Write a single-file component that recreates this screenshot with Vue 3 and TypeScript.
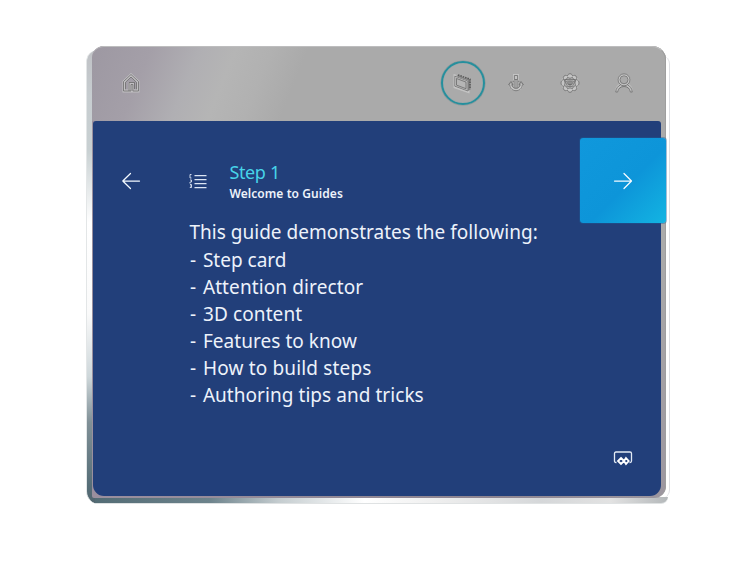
<script setup lang="ts">
interface GuideLine { text: string; spacing: number }

const intro = 'This guide demonstrates the following:'
const lines: GuideLine[] = [
  { text: 'Step card', spacing: 0 },
  { text: 'Attention director', spacing: 0.11 },
  { text: '3D content', spacing: 0.12 },
  { text: 'Features to know', spacing: 0.05 },
  { text: 'How to build steps', spacing: 0.17 },
  { text: 'Authoring tips and tricks', spacing: 0.05 },
]
</script>

<template>
  <main class="stage">
    <div class="frame">
      <div class="edge edge-left"></div>
      <div class="edge edge-right"></div>
      <div class="edge edge-bottom"></div>
      <section class="face">
        <nav class="toolbar">
          <button class="tool home" aria-label="Home">
            <svg width="20" height="20" viewBox="0 0 20 20">
              <g class="halo"><path d="M3 18V8.600L10 2l7 6.600V18h-5.500v-7H8.500v7z" /></g>
              <g class="ink"><path d="M2.500 18V8.500L10 1.500l7.500 7V18h-5.600v-6.500H10V18z" /><path d="M4.500 16.300V9.300L10 4l5.500 5.300v7M8 18v-8.500h5.500V16" /></g>
            </svg>
          </button>
          <div class="tools">
            <button class="tool ring" aria-label="Step card">
              <svg width="22" height="22" viewBox="0 0 22 22">
                <path class="halo" d="M3 4l13 4.500v11L3 15z" />
                <path class="pages" d="M5.500 3.200l13 4.500v10l-2.500 1V8.500L4 4z" />
                <path class="sheet" d="M3 4.500l12.500 4.500v10L3 14.500z" />
                <g class="ink"><path d="M2.800 4.200l13 4.800v10l-13-4.800zM4.500 6.500l9.500 3.600v6.600l-9.500-3.600z" /><path class="dash" d="M6 3l12 4.200v9.800" /></g>
              </svg>
            </button>
            <button class="tool" aria-label="Anchor">
              <svg width="20" height="20" viewBox="0 0 20 20">
                <g class="halo"><path d="M8.500 2.500h3v4h-3zM10 6v10M4 11c0 4 3 5.500 6 5.500s6-1.500 6-5.500" /></g>
                <g class="ink"><path d="M8.400 2.500h3.200v4H8.400zM9 6.500v9M11 6.500v9" /><path d="M7.700 7.500L7 9M12.300 7.500L13 9M5 8.500l-2.500 3.200h1.200c0 4 3.300 6 6.300 6s6.300-2 6.300-6h1.200L15 8.500l-2 3.200h1.200c-.5 2.300-2 3.600-4.200 3.600s-3.700-1.300-4.200-3.600H7z" /></g>
              </svg>
            </button>
            <button class="tool" aria-label="Settings">
              <svg width="22" height="22" viewBox="0 0 22 22">
                <circle class="halo" cx="11" cy="11" r="7.500" /><circle class="halo" cx="11" cy="11" r="4" />
                <g class="ink">
                  <path d="M8.500 4c0-3 5-3 5 0 2.500-2 5.500 1 3.500 3.500 4 .5 4 6.500 0 7 2 2.500-1 5.500-3.500 3.500 0 3-5 3-5 0-2.500 2-5.500-1-3.500-3.500-4-.5-4-6.500 0-7C3 5 6 2 8.500 4z" />
                  <path d="M8.500 5.500q2.500 2 5 0 .5 2.500 3 3-1.500 2.500 0 5-2.500.5-3 3-2.500-1.500-5 0-.5-2.500-3-3 1.500-2.500 0-5 2.500-.5 3-3z" />
                  <path d="M5.500 7.500h11l-3 7h-5zM7.500 9h7l-2 4h-3zM10 9.500v3h2v-3" />
                </g>
              </svg>
            </button>
            <button class="tool" aria-label="Profile">
              <svg width="20" height="22" viewBox="0 0 20 22">
                <g class="halo"><circle cx="10" cy="8" r="5" /><path d="M2.700 20c0-4 2-6.500 4.800-7M17.300 20c0-4-2-6.500-4.800-7" /></g>
                <g class="ink"><circle cx="10" cy="7.800" r="6" /><circle cx="10" cy="7.800" r="4" /><path d="M6.500 12.900C4 14 2 16.500 1.700 20h2c.3-3.500 3-5.500 6.300-5.500s6 2 6.300 5.500h2c-.3-3.500-2.300-6-4.800-7.100" /></g>
              </svg>
            </button>
          </div>
        </nav>

        <article class="card">
          <button class="back" aria-label="Previous step">
            <svg class="line" width="20" height="18" viewBox="0 0 20 18"><path d="M18.500 9H1.800M9.500 1.500L1.800 9l7.700 7.500" /></svg>
          </button>
          <div class="content">
            <header class="heading">
              <svg class="list" width="18" height="16" viewBox="0 0 18 16">
                <path d="M5.500 2.500h12M5.500 6.500h12M5.500 10.500h12M5.500 14.500h12" />
                <path class="nums" d="M2.500 1.500H1V5M1 5h1.500M1 7h1.500v2H1v1.500M1 11.500h1.500v3H.8M1 13h1.500" />
              </svg>
              <div>
                <h1>Step 1</h1>
                <h2>Welcome to Guides</h2>
              </div>
            </header>
            <div class="body">
              <p class="intro">{{ intro }}</p>
              <p v-for="line in lines" :key="line.text" :style="{ letterSpacing: line.spacing + 'px' }"><span class="bullet">-</span>{{ line.text }}</p>
            </div>
          </div>
          <div class="side">
            <button class="next" aria-label="Next step">
              <svg class="line" width="20" height="18" viewBox="0 0 20 18"><path d="M1.500 9h16.700M11 1.500L18.500 9 11 16.500" /></svg>
            </button>
            <svg class="media" width="20" height="16" viewBox="0 0 20 16">
              <path d="M3.500 12.500H3Q1.500 12.500 1.500 11V3.500Q1.500 2 3 2h14q1.500 0 1.500 1.500V11q0 1.500-1.500 1.500h-.5" />
              <path class="bold" d="M8 8l3 3-3 3-3-3zM13 8l2.700 3-2.700 3-2-3z" />
            </svg>
          </div>
        </article>
      </section>
    </div>
  </main>
</template>

<style>
body { margin: 0; background: #fff; }
</style>

<style scoped>
* { box-sizing: border-box; }
.stage { width: 743px; height: 563px; padding: 46px 0 0 92px; overflow: hidden; background: #fff; font-family: "Noto Sans", "Open Sans", sans-serif; }
.frame { position: relative; width: 574px; height: 458px; }
.edge { position: absolute; }
.edge-left { left: -6px; top: 4px; width: 16px; height: 454px; border-radius: 12px 0 0 13px; border-left: 1px solid #e3e6e7; background: linear-gradient(#bfc1c5 0, #c7cdd0 10%, #c8d0d2 22%, #fff 38%, #fafafa 58%, #ced7da 72%, #809097 82%, #566e78 96%, #51656e); }
.edge-bottom { left: 3px; right: -2px; bottom: 0; height: 7px; border-radius: 0 0 12px 0; border-bottom: 1px solid #dfe2e3; background: linear-gradient(90deg, #536c75, #6d838c 20%, #c4cccf 32%, #fff 47%, #eee 60%, #d5d7d9 78%, #e2e2e2 90%, #b4b8ba); }
.edge-right { right: -4px; top: 10px; width: 8px; height: 442px; border-right: 1px solid #dedfe3; background: #fff; border-radius: 0 8px 8px 0; }
.face { position: relative; height: 452px; padding: 0 5px 2px 1px; border-radius: 12px 14px 12px 2px; background: linear-gradient(90deg, #9a8f9e, #8e8591 70%, #0000 99%), linear-gradient(#aaa 0, #aaa 45%, #9c969f 100%); }
.face::before { content: ""; position: absolute; inset: 0; border-radius: inherit; border-top: 1px solid #bdbdbe; border-right: 1px solid #9e9e9e; pointer-events: none; z-index: 1; }
button { border: 0; padding: 0; background: none; }
.toolbar { height: 75px; margin: 0 -5px 0 -1px; display: flex; align-items: center; justify-content: space-between; padding: 0 20px 1px 17px; border-radius: 12px 14px 0 0; background: linear-gradient(112deg, #9d98a2 0, #a49fa8 10%, #b0afb3 18%, #b5b5b5 24%, #b1b1b1 30%, #aaa 36%, #aaa 100%); }
.tool { width: 44px; height: 44px; display: grid; place-items: center; }
.tools { display: flex; gap: 10px; }
.ring { margin-right: -1px; border: 2px solid #268f9d; border-radius: 50%; box-shadow: 0 0 0 .6px #8b9799, inset 0 0 0 .6px #9aa9ab; }
svg { display: block; fill: none; }
.halo { stroke: #cfcfcf; stroke-width: 3; opacity: .7; }
.ink { stroke: #676767; stroke-width: .75; }
.pages { fill: #858585; }
.sheet { fill: #b5b5b5; stroke: #d5d5d5; }
.dash { stroke: #555; stroke-width: 1.500; stroke-dasharray: 1.500 1; }
.card { height: 375px; display: grid; grid-template-columns: 96px 1fr 81px; border-radius: 3px 3px 11px 11px; background: #223f7a; color: #edf2fa; }
.back { width: 76px; height: 119px; display: grid; place-items: center; }
.line { stroke: #f4faff; stroke-width: 1.250; stroke-linecap: round; stroke-linejoin: round; }
.content { padding: 39px 0 0 .4px; }
.heading { height: 59px; display: flex; gap: 22px; }
.list { margin-top: 13px; stroke: #dce5f4; stroke-width: 1.250; }
.nums { stroke-width: .9; }
h1 { margin: 0; height: 25px; line-height: 24px; font-size: 18px; font-weight: 400; letter-spacing: -.35px; color: #47d3e9; }
h2 { margin: 0; line-height: 17px; font-size: 12px; font-weight: 600; letter-spacing: .07px; }
.body { padding-top: .4px; }
p { margin: 0; height: 27.150px; line-height: 27.150px; font-size: 19px; white-space: pre; }
.intro { letter-spacing: .02px; }
.bullet { display: inline-block; width: 13.500px; padding-left: .5px; }
.side { position: relative; display: flex; flex-direction: column; padding-top: 17px; z-index: 2; }
.next { width: 86px; height: 85px; display: grid; place-items: center; border-radius: 3px; background: linear-gradient(135deg, #1098dc 0, #0d95d9 55%, #13b4e2 100%); box-shadow: 0 0 0 1px #1c5f9b66; }
.media { margin: 227px 0 0 33px; stroke: #e3ebf5; stroke-width: 1.300; }
.bold { stroke: #fff; stroke-width: 1.800; }
</style>
